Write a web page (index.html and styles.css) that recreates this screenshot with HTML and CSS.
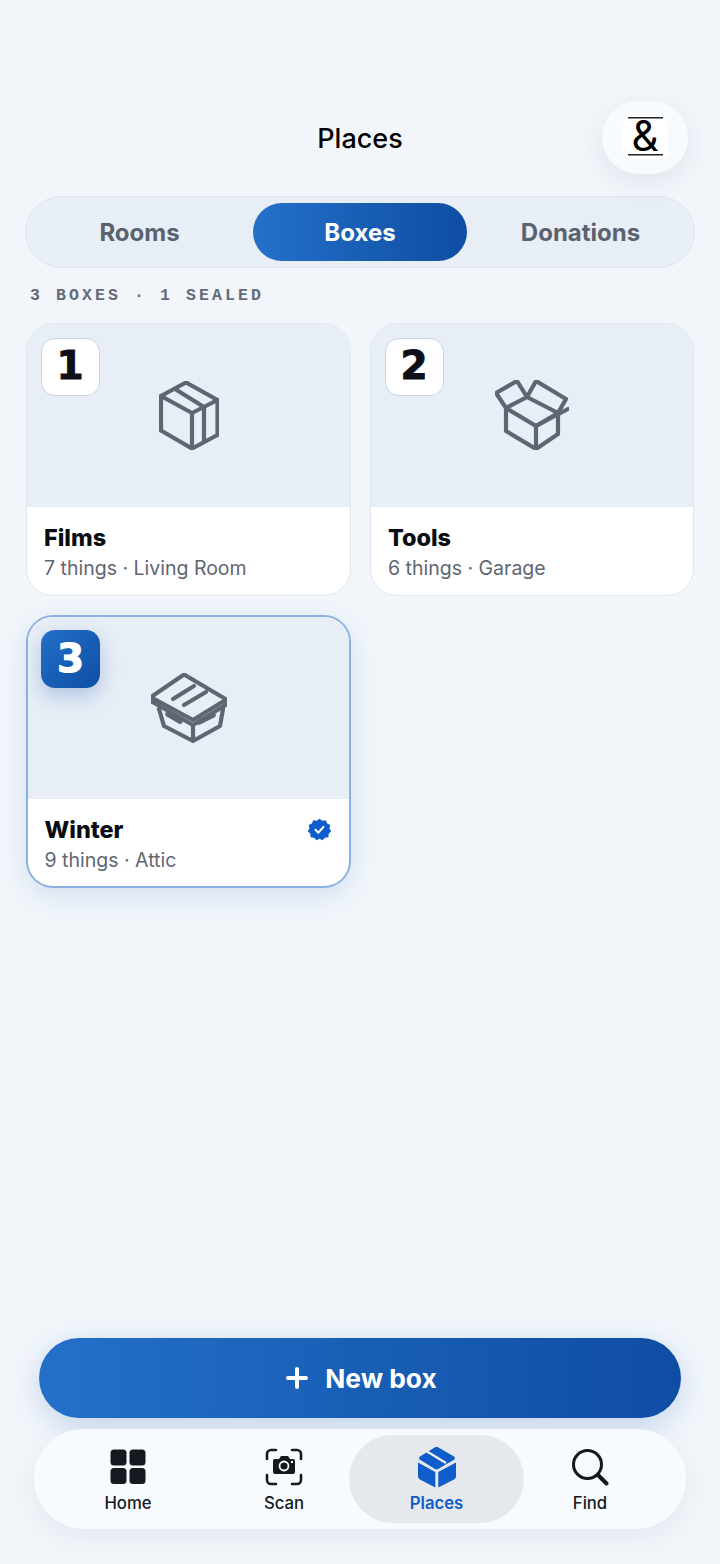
FILE: index.html
```html
<!DOCTYPE html>
<html lang="en">
<head>
  <meta charset="UTF-8" />
  <meta name="viewport" content="width=device-width, initial-scale=1.0"/>
  <title>Places</title>
  <link rel="stylesheet" href="styles.css">
</head>
<body>

  <header class="top">
    <h1>Places</h1>
    <div class="avatar">
      <div class="logo">&amp;</div>
    </div>
  </header>

  <nav class="tabs">
    <a href="#rooms">Rooms</a>
    <a href="#boxes" class="active">Boxes</a>
    <a href="#donations">Donations</a>
  </nav>

  <p class="count">3 BOXES · 1 SEALED</p>

  <section class="grid">
    <article class="card">
      <div class="art">
        <span class="num">1</span>
        <svg class="box" viewBox="0 0 60 69" width="60" height="69">
          <path d="M27 1.500 58.500 19V54L33 67.500 2 49.500V15Z"/>
          <path d="M2 15 33 32 58.500 19M33 32V67.500M16 8 45 26V60"/>
        </svg>
      </div>
      <div class="info">
        <div><h2>Films</h2><p>7 things · Living Room</p></div>
      </div>
    </article>

    <article class="card">
      <div class="art">
        <span class="num">2</span>
        <svg class="box" viewBox="0 0 74 70" width="74" height="70">
          <path d="M11 28 41 46 63 33V54L41 69 11 51Z"/>
          <path d="M41 46V69M32 17 63 33M11 28 32 17"/>
          <path d="M11 28 1 13 22 1 32 17 41 1 71 19 63 33M41 46 73 29"/>
        </svg>
      </div>
      <div class="info">
        <div><h2>Tools</h2><p>6 things · Garage</p></div>
      </div>
    </article>

    <article class="card sealed">
      <div class="art">
        <span class="num">3</span>
        <svg class="box" viewBox="0 0 76 70" width="76" height="70">
          <path d="M33 1.500 74.500 26V32L42 52 1.500 29V23Z"/>
          <path d="M1.500 25 42 47 74.500 27M42 52V68M8 36 13 53 42 68 69 53 72 36"/>
          <path d="M22 26 43 13M33 32 55 19"/>
          <path class="clip" d="M17 41 29 48M48 49 62 42"/>
        </svg>
      </div>
      <div class="info">
        <div><h2>Winter</h2><p>9 things · Attic</p></div>
        <svg class="seal" viewBox="0 0 24 24" width="23" height="23">
          <path fill="#0f5ccb" d="M12 .8l3 2 3.600-.4 1.400 3.300 3.200 1.700-.8 3.600 1.800 3-2.600 2.500-.3 3.600-3.600.5L15 23.200l-3-1.600-3 1.600-2.700-2.600-3.600-.5-.3-3.600L-.2 14l1.800-3-.8-3.600L4 5.700 5.400 2.400 9 2.800z"/>
          <path fill="none" stroke="#fff" stroke-width="2.200" stroke-linecap="round" stroke-linejoin="round" d="M7.800 12.300l3 3 5.400-6"/>
        </svg>
      </div>
    </article>
  </section>

  <div class="spacer"></div>

  <button class="new-box" type="button">
    <svg viewBox="0 0 22 22" width="22" height="22">
      <path d="M2 11H20M11 2V20" stroke="#fff" stroke-width="4" stroke-linecap="round"/>
    </svg>
    New box
  </button>

  <nav class="bottom">
    <a href="#home" class="home">
      <svg viewBox="0 0 36 36" width="36" height="36" fill="#14181f">
        <rect x="0.500" y="0.500" width="16" height="16" rx="3.500"/>
        <rect x="19.500" y="0.500" width="16" height="16" rx="3.500"/>
        <rect x="0.500" y="19" width="16" height="16" rx="3.500"/>
        <rect x="19.500" y="19" width="16" height="16" rx="3.500"/>
      </svg>
      Home
    </a>
    <a href="#scan" class="scan">
      <svg viewBox="0 0 38 38" width="38" height="38">
        <path fill="none" stroke="#14181f" stroke-width="2.600" stroke-linecap="round" d="M2 11V6a4 4 0 0 1 4-4h5M27 2h5a4 4 0 0 1 4 4v5M2 27v5a4 4 0 0 0 4 4h5M27 36h5a4 4 0 0 0 4-4v-5"/>
        <path fill="#14181f" d="M10 11h4l2-3h7l2 3h3a2 2 0 0 1 2 2v11a2 2 0 0 1-2 2H10a2 2 0 0 1-2-2V13a2 2 0 0 1 2-2z"/>
        <circle cx="19" cy="18" r="4.500" fill="#14181f" stroke="#fff" stroke-width="1.800"/>
        <circle cx="27" cy="14" r="1.200" fill="#fff"/>
      </svg>
      Scan
    </a>
    <a href="#places" class="places active">
      <svg viewBox="0 0 38 42" width="38" height="42" fill="#0f5ccb">
        <path d="M17 1.300a3 3 0 0 1 3 0L36 10.500a2 2 0 0 1 0 3.300L20 23a3 3 0 0 1-3 0L2 13.800a2 2 0 0 1 0-3.300z"/>
        <path d="M9 5.500 28 17" stroke="#eef1f4" stroke-width="2.400"/>
        <path d="M0 16.500 17.300 26V41.500L2 33.500a3.500 3.500 0 0 1-2-3z"/>
        <path d="M38 16.500 20.300 26V41.500L36 33.500a3.500 3.500 0 0 0 2-3z"/>
      </svg>
      Places
    </a>
    <a href="#find">
      <svg viewBox="0 0 37 37" width="37" height="37">
        <circle cx="15.500" cy="15.500" r="14" fill="none" stroke="#14181f" stroke-width="3"/>
        <path d="M26 26 34.500 34.500" fill="none" stroke="#14181f" stroke-width="4" stroke-linecap="round"/>
      </svg>
      Find
    </a>
  </nav>

</body>
</html>
```

FILE: styles.css
```css
* {
  margin: 0;
  padding: 0;
  box-sizing: border-box;
}

html, body {
  height: 1564px;
  overflow: hidden;
}

body {
  display: flex;
  flex-direction: column;
  font-family: Inter, "Liberation Sans", sans-serif;
  background: #f2f6fb;
  color: #0d1117;
}

a {
  text-decoration: none;
}

/* Header */
.top {
  height: 196px;
  padding: 101px 32px 0 0;
  display: flex;
  justify-content: flex-end;
  align-items: flex-start;
  position: relative;
}

.top h1 {
  position: absolute;
  top: 122px;
  left: 0;
  right: 0;
  text-align: center;
  font-size: 27px;
  line-height: 34px;
  font-weight: 500;
  color: #000;
}

.avatar {
  width: 86px;
  height: 73px;
  border-radius: 37px;
  background: #f8fbfe;
  box-shadow: 0 8px 26px rgba(40, 60, 90, 0.09);
  display: flex;
  align-items: center;
  justify-content: center;
}

.logo {
  width: 45px;
  height: 43px;
  padding-bottom: 4px;
  border-radius: 8px;
  background: #fff;
  display: flex;
  align-items: center;
  justify-content: center;
  font-size: 42px;
  font-weight: 400;
  line-height: 1;
  color: #000;
  background-image: linear-gradient(#222, #222), linear-gradient(#222, #222);
  background-size: 35px 1.500px;
  background-repeat: no-repeat;
  background-position: center 1px, center 38px;
}

/* Tabs */
.tabs {
  margin: 0 25px;
  height: 72px;
  padding: 6px 0;
  display: grid;
  grid-template-columns: 227px 214px 1fr;
  border: 1.500px solid #dde6f1;
  border-radius: 36px;
  background: #e8eef6;
}

.tabs a {
  display: flex;
  align-items: center;
  justify-content: center;
  font-size: 24px;
  font-weight: 700;
  color: #5a6270;
  border-radius: 29px;
}

.tabs a.active {
  color: #fff;
  background: linear-gradient(90deg, #2470c9, #0e4da3);
}

.count {
  margin: 18px 0 0 30px;
  font-family: "Liberation Mono", monospace;
  font-size: 16.500px;
  line-height: 20px;
  font-weight: 700;
  letter-spacing: 3.100px;
  color: #636b78;
}

/* Box cards */
.grid {
  margin: 17px 26px 0;
  display: grid;
  grid-template-columns: 325px 324px;
  column-gap: 19px;
  row-gap: 19px;
}

.card {
  height: 273px;
  border: 1.500px solid #dde6f1;
  border-radius: 27px;
  background: #fff;
  overflow: hidden;
  display: flex;
  flex-direction: column;
}

.card.sealed {
  border: 2.500px solid #8bb1e2;
  box-shadow: 0 8px 28px rgba(30, 90, 180, 0.14);
}

.art {
  height: 182.500px;
  background: #e8eef6;
  position: relative;
  display: flex;
  align-items: center;
  justify-content: center;
}

.sealed .art {
  height: 181.500px;
}

.box {
  fill: none;
  stroke: #5f6673;
  stroke-width: 4.200;
  stroke-linejoin: round;
  stroke-linecap: round;
}

.box .clip {
  stroke-width: 5.500;
}

.num {
  position: absolute;
  top: 13.500px;
  left: 13.500px;
  width: 59px;
  height: 58px;
  border: 1.500px solid #c9d4e2;
  border-radius: 14px;
  background: #fff;
  display: flex;
  align-items: center;
  justify-content: center;
  padding-bottom: 2px;
  font-family: "DejaVu Sans", sans-serif;
  font-size: 39px;
  font-weight: 700;
  color: #0d1117;
  -webkit-text-stroke: 1px #0d1117;
}

.sealed .num {
  top: 13px;
  left: 13px;
  border: none;
  color: #fff;
  -webkit-text-stroke: 1px #fff;
  background: linear-gradient(135deg, #2470c9, #0e4da3);
  box-shadow: 0 8px 20px rgba(30, 90, 180, 0.28);
}

.info {
  flex: 1;
  padding: 16px 18px 0 17px;
  display: flex;
  justify-content: space-between;
  align-items: flex-start;
}

.sealed .info {
  padding: 16px 18px 0 16.500px;
}

.info h2 {
  font-size: 23.400px;
  line-height: 29px;
  font-weight: 800;
  color: #0a0d12;
}

.info p {
  margin-top: 3px;
  font-size: 19.500px;
  line-height: 26px;
  color: #5f6673;
}

.seal {
  margin-top: 3px;
}

.spacer {
  flex: 1;
}

/* Bottom actions */
.new-box {
  margin: 0 39px;
  height: 80px;
  padding-left: 3px;
  border: none;
  border-radius: 40px;
  display: flex;
  align-items: center;
  justify-content: center;
  gap: 17px;
  color: #fff;
  font-family: Inter, "Liberation Sans", sans-serif;
  font-size: 26.300px;
  font-weight: 700;
  background: linear-gradient(90deg, #2470c9, #0e4da3);
  box-shadow: 0 8px 30px rgba(30, 90, 180, 0.22);
}

.bottom {
  margin: 11px 34px 35px;
  height: 100px;
  padding: 6px 0 6px 6px;
  border-radius: 50px;
  background: #f8fbfe;
  box-shadow: 0 8px 28px rgba(40, 60, 90, 0.07);
  display: grid;
  grid-template-columns: 176px 133px 175px 132px;
}

.bottom a {
  display: flex;
  flex-direction: column;
  align-items: center;
  justify-content: flex-end;
  gap: 7px;
  padding-bottom: 10px;
  border-radius: 44px;
  font-size: 16.700px;
  line-height: 20px;
  font-weight: 500;
  color: #14181f;
}

.bottom a.scan {
  padding-left: 3px;
}

.bottom a.home svg {
  margin-bottom: 1px;
}

.bottom a.places svg {
  margin-bottom: -2px;
}

.bottom a.active {
  background: #e5e8ec;
  color: #0f5ccb;
  font-weight: 600;
}
```
